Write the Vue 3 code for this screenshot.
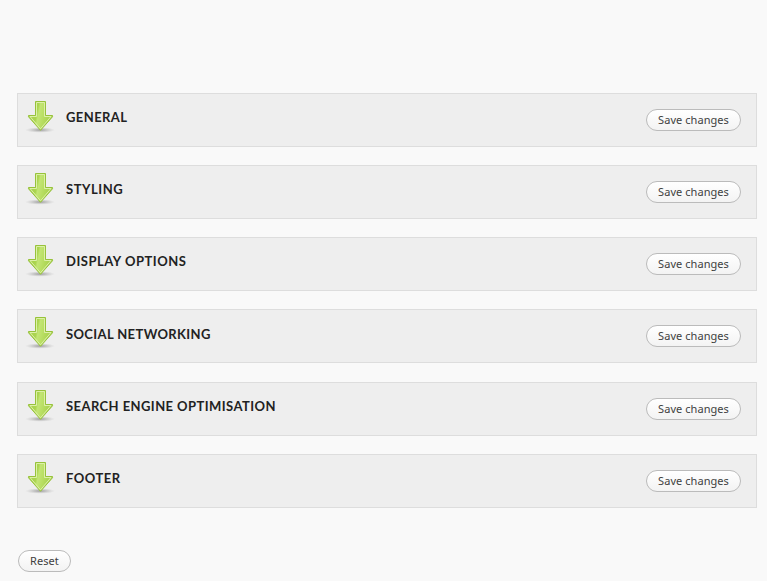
<script setup>
const sections = [
  { title: 'GENERAL', spacing: 0.4 },
  { title: 'STYLING', spacing: 0.54 },
  { title: 'DISPLAY OPTIONS', spacing: 0.52 },
  { title: 'SOCIAL NETWORKING', spacing: 0.37 },
  { title: 'SEARCH ENGINE OPTIMISATION', spacing: 0.43 },
  { title: 'FOOTER', spacing: 0.5 },
]
</script>

<template>
  <main class="options">
    <svg class="defs" width="0" height="0" aria-hidden="true">
      <defs>
        <linearGradient id="arrowFill" x1="0" y1="0" x2="1" y2="0.25">
          <stop offset="0" stop-color="#a4d045" />
          <stop offset="0.42" stop-color="#abd550" />
          <stop offset="0.5" stop-color="#c3e574" />
          <stop offset="0.7" stop-color="#b8de62" />
          <stop offset="1" stop-color="#a5d04b" />
        </linearGradient>
        <radialGradient id="arrowShadow">
          <stop offset="0" stop-color="#666" stop-opacity="0.6" />
          <stop offset="0.55" stop-color="#777" stop-opacity="0.25" />
          <stop offset="1" stop-color="#999" stop-opacity="0" />
        </radialGradient>
      </defs>
    </svg>
    <div class="sections">
      <section v-for="s in sections" :key="s.title" class="section">
        <svg class="arrow" width="32" height="34" viewBox="0 0 32 34">
          <ellipse cx="16" cy="30" rx="15" ry="2.8" fill="url(#arrowShadow)" />
          <path d="M11.5 1.5H21.5V15.5H28.5V16.8L16.5 30.3L4.5 16.8V15.5H11.5Z" fill="url(#arrowFill)" stroke="#97c23b" stroke-width="1" stroke-linejoin="round" />
          <path d="M12.5 2.5H20.5V16.5H27L16.5 28.8L6 16.5H12.5Z" fill="none" stroke="#dcf0a8" stroke-width="1" />
        </svg>
        <h3 class="title" :style="{ letterSpacing: s.spacing + 'px' }">{{ s.title }}</h3>
        <button class="button save">Save changes</button>
      </section>
    </div>
    <button class="button reset">Reset</button>
  </main>
</template>

<style>
body {
  background: #f9f9f9;
}
</style>

<style scoped>
.options {
  box-sizing: border-box;
  height: 581px;
  padding: 93px 10px 0 17px;
  overflow: hidden;
  background: #f9f9f9;
  font-family: "Lucida Grande", "Open Sans", sans-serif;
}
.defs {
  display: block;
}
.sections {
  display: flex;
  flex-direction: column;
  gap: 18.15px;
}
.section {
  box-sizing: border-box;
  height: 54px;
  display: flex;
  align-items: flex-start;
  border: 1px solid #ddd;
  background: #eee;
  padding-right: 15px;
}
.arrow {
  flex: none;
  margin: 6px 0 0 6px;
}
.title {
  margin: 13.15px auto 0 10px;
  font: bold 13px/20px "Lucida Grande", Lato, sans-serif;
  color: #222;
  white-space: nowrap;
}
.button {
  box-sizing: border-box;
  height: 22px;
  padding: 0 0 1px;
  border: 1px solid #bbb;
  border-radius: 11px;
  background: linear-gradient(#fff, #f3f3f3);
  color: #404040;
  font: 11px/19px "Lucida Grande", "Noto Sans", sans-serif;
  letter-spacing: 0.06px;
  text-align: center;
  white-space: nowrap;
}
.save {
  width: 95px;
  margin-top: 15px;
}
.reset {
  display: block;
  width: 53px;
  margin: 42.25px 0 0 1px;
}
</style>
